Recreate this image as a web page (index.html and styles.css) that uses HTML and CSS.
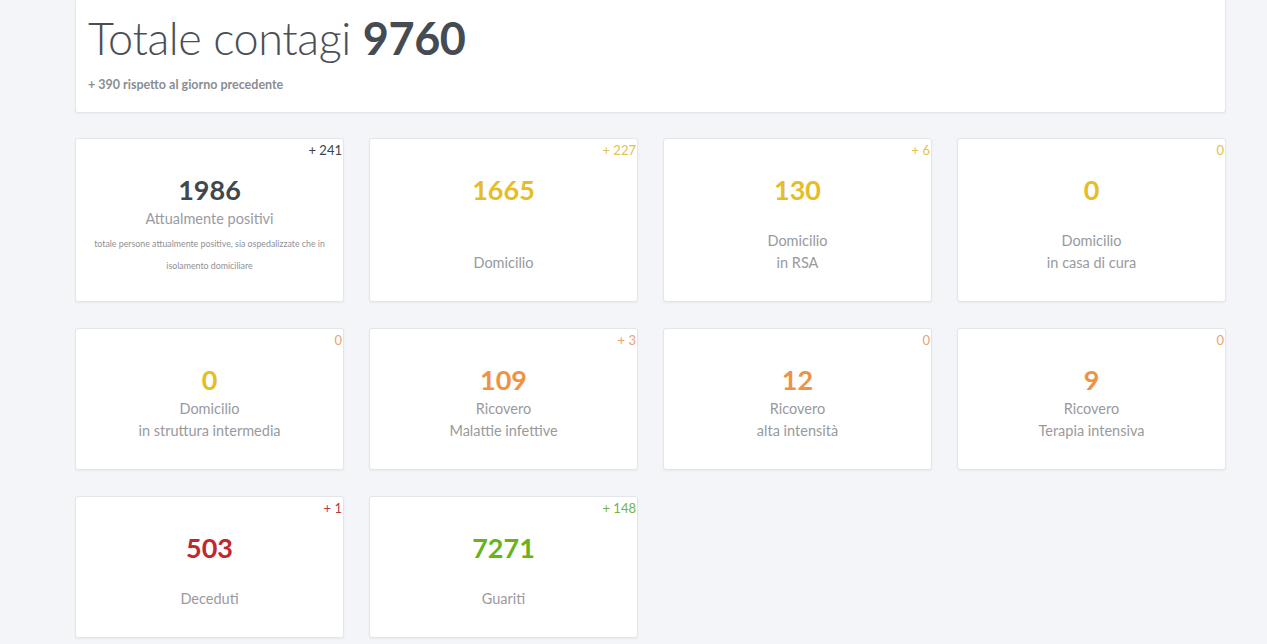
FILE: index.html
```html
<!DOCTYPE html>
<html lang="it">
<head>
<meta charset="utf-8">
<title>Totale contagi</title>
<link rel="stylesheet" href="styles.css">
</head>
<body>
<main class="page">
  <section class="summary">
    <h1 class="summary-title">Totale contagi <strong>9760</strong></h1>
    <p class="summary-sub">+ 390 rispetto al giorno precedente</p>
  </section>

  <section class="grid">
    <div class="card">
      <div class="delta dark">+ 241</div>
      <div class="num dark">1986</div>
      <div class="label big">Attualmente positivi</div>
      <div class="desc">totale persone attualmente positive, sia ospedalizzate che in isolamento domiciliare</div>
    </div>
    <div class="card">
      <div class="delta yellow-l">+ 227</div>
      <div class="num yellow">1665</div>
      <div class="label"><br><br>Domicilio</div>
    </div>
    <div class="card">
      <div class="delta yellow-l">+ 6</div>
      <div class="num yellow">130</div>
      <div class="label"><br>Domicilio<br>in RSA</div>
    </div>
    <div class="card">
      <div class="delta yellow-l">0</div>
      <div class="num yellow">0</div>
      <div class="label"><br>Domicilio<br>in casa di cura</div>
    </div>

    <div class="card">
      <div class="delta orange-l">0</div>
      <div class="num yellow">0</div>
      <div class="label">Domicilio<br>in struttura intermedia</div>
    </div>
    <div class="card">
      <div class="delta orange-l">+ 3</div>
      <div class="num orange">109</div>
      <div class="label">Ricovero<br>Malattie infettive</div>
    </div>
    <div class="card">
      <div class="delta orange-l">0</div>
      <div class="num orange">12</div>
      <div class="label">Ricovero<br>alta intensità</div>
    </div>
    <div class="card">
      <div class="delta orange-l">0</div>
      <div class="num orange">9</div>
      <div class="label">Ricovero<br>Terapia intensiva</div>
    </div>

    <div class="card">
      <div class="delta red-l">+ 1</div>
      <div class="num red">503</div>
      <div class="label"><br>Deceduti</div>
    </div>
    <div class="card">
      <div class="delta green-l">+ 148</div>
      <div class="num green">7271</div>
      <div class="label"><br>Guariti</div>
    </div>
  </section>
</main>
</body>
</html>
```

FILE: styles.css
```css
html, body {
  margin: 0;
  padding: 0;
  background: #f4f5f9;
  font-family: Lato, "Open Sans", "Liberation Sans", sans-serif;
  color: #4a4f55;
}

.page {
  width: 1151px;
  margin-left: 75px;
  padding-bottom: 20px;
}

.summary {
  background: #fff;
  border: 1px solid #e3e5ea;
  border-top: none;
  border-radius: 0 0 3px 3px;
  box-shadow: 0 1px 2px rgba(0,0,0,0.04);
  padding: 9px 12px 20px;
  height: 83px;
}

.summary-title {
  margin: 0;
  font-size: 45px;
  font-weight: 300;
  line-height: 58px;
  color: #4a4f55;
  letter-spacing: -0.4px;
}

.summary-title strong {
  font-weight: 700;
  color: #454b52;
}

.summary-sub {
  margin: 10px 0 0;
  font-size: 12.5px;
  font-weight: 700;
  color: #8a8d92;
}

.grid {
  margin-top: 25px;
  display: grid;
  grid-template-columns: repeat(4, 1fr);
  column-gap: 25px;
  row-gap: 26px;
}

.card {
  background: #fff;
  border: 1px solid #e3e5ea;
  border-radius: 3px;
  box-shadow: 0 1px 2px rgba(0,0,0,0.05);
  text-align: center;
  padding: 0 1px 27px;
}

.delta {
  text-align: right;
  font-size: 13px;
  line-height: 22px;
  height: 22px;
}

.num {
  margin-top: 11px;
  font-size: 27px;
  font-weight: 700;
  line-height: 36px;
}

.label {
  font-size: 14.5px;
  line-height: 22px;
  color: #999a9e;
}

.label.big {
  font-size: 14.5px;
  color: #9a9b9f;
}

.desc {
  margin: 3px auto -3px;
  width: 256px;
  font-size: 8.8px;
  line-height: 22px;
  color: #8f9095;
}

.dark { color: #40474e; }
.delta.dark { color: #3d4248; }
.yellow { color: #e6bd27; }
.yellow-l { color: #e3c04e; }
.orange { color: #ef9244; }
.orange-l { color: #eba272; }
.red { color: #c2272f; }
.red-l { color: #b53a40; }
.green { color: #66b31a; }
.green-l { color: #74b344; }
```
